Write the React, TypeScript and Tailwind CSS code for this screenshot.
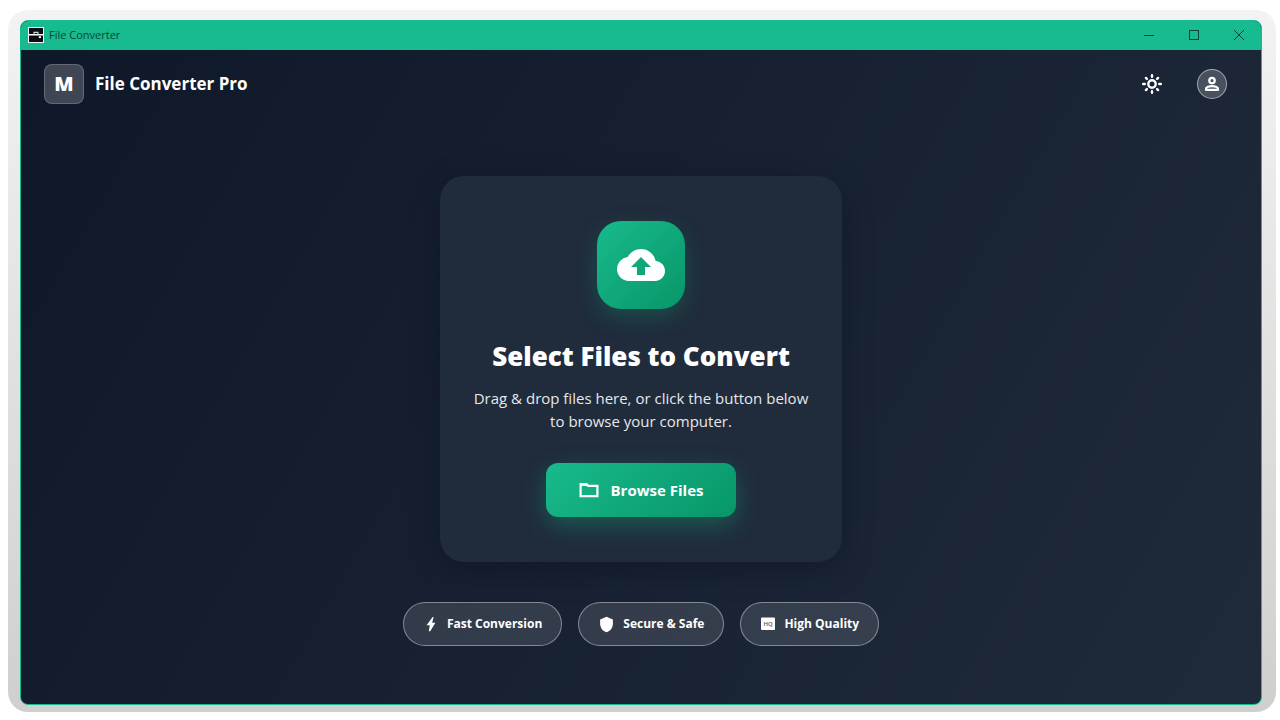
import { useState } from "react";
import type { ReactNode } from "react";
import { MdCloudUpload, MdShield } from "react-icons/md";

function AppIcon() {
  return (
    <svg width="16" height="16" viewBox="0 0 16 16" aria-hidden="true">
      <rect x="0.5" y="0.5" width="15" height="15" fill="#0b0d12" stroke="#e8f5f0" />
      <path d="M1 7.8h14" stroke="#fff" strokeWidth="1.5" />
      <path d="M6 7.2V5.4h4v1.8" fill="none" stroke="#d5d5d5" strokeWidth="1.1" />
      <path d="M10.8 10.2H13" stroke="#fff" strokeWidth="1.8" />
    </svg>
  );
}

function SunIcon() {
  return (
    <svg width="22" height="22" viewBox="0 0 22 22" fill="none" stroke="currentColor" strokeWidth="2.4" strokeLinecap="round" aria-hidden="true">
      <circle cx="11" cy="11" r="3.7" />
      <path d="M11 2.2v1.6M11 18.2v1.6M2.2 11h1.6M18.2 11h1.6M4.9 4.9l1 1M16.1 16.1l1 1M4.9 17.1l1-1M16.1 5.9l1-1" />
    </svg>
  );
}

function PersonIcon() {
  return (
    <svg width="16" height="16" viewBox="0 0 16 16" fill="none" stroke="currentColor" strokeWidth="2.3" strokeLinejoin="round" aria-hidden="true">
      <circle cx="8" cy="4.6" r="2.7" />
      <path d="M2 13.8v-.8c0-1.9 3.6-2.8 6-2.8s6 .9 6 2.8v.8z" />
    </svg>
  );
}

function FolderIcon() {
  return (
    <svg width="20" height="20" viewBox="0 0 20 20" fill="none" stroke="currentColor" strokeWidth="2.2" aria-hidden="true">
      <path d="M1.6 16.2V4h5.8l1.8 1.8h9.2v10.4z" />
      <path d="M1.6 4.8h7" />
    </svg>
  );
}

function BoltIcon() {
  return (
    <svg width="16" height="16" viewBox="0 0 16 16" fill="currentColor" aria-hidden="true">
      <path d="M9.6 1 3.6 9.2h3.2L5.8 15.2h1.4l5.2-8.4H9.2L10.6 1z" />
    </svg>
  );
}

function HighQualityIcon() {
  return (
    <svg width="16" height="16" viewBox="0 0 16 16" aria-hidden="true">
      <rect x="1" y="1.5" width="14" height="12.5" rx="1" fill="currentColor" />
      <text x="8" y="10" textAnchor="middle" fontSize="6" fontWeight="600" fill="#4b5361">
        HQ
      </text>
    </svg>
  );
}

const features = [
  { label: "Fast Conversion", icon: <BoltIcon /> },
  { label: "Secure & Safe", icon: <MdShield size={17} /> },
  { label: "High Quality", icon: <HighQualityIcon /> },
];

function WindowButton({ label, children }: { label: string; children: ReactNode }) {
  return (
    <button type="button" aria-label={label} className="flex h-full w-[45px] items-center justify-center">
      <svg width="12" height="12" viewBox="0 0 12 12" fill="none" stroke="#0b4434" aria-hidden="true">
        {children}
      </svg>
    </button>
  );
}

function TitleBar() {
  return (
    <div className="flex h-[29px] items-center justify-between bg-[#17bb8f] pb-px pl-[7px]">
      <div className="flex items-center gap-[5px] text-[#0b4434]">
        <AppIcon />
        <span className="text-[11px]">File Converter</span>
      </div>
      <div className="flex h-full">
        <WindowButton label="Minimize">
          <path d="M1 6.5h10" />
        </WindowButton>
        <WindowButton label="Maximize">
          <rect x="1.5" y="1.5" width="9" height="9" />
        </WindowButton>
        <WindowButton label="Close">
          <path d="M1 1l10 10M11 1L1 11" />
        </WindowButton>
      </div>
    </div>
  );
}

function Header() {
  return (
    <header className="flex items-center justify-between py-3.5 pr-[34px] pl-[23px] text-white">
      <div className="flex items-center gap-[11px]">
        <div className="flex size-10 items-center justify-center rounded-lg border border-white/20 bg-white/20 text-xl font-extrabold">
          M
        </div>
        <h1 className="text-[17px] font-bold">File Converter Pro</h1>
      </div>
      <div className="flex items-center gap-[34px]">
        <button type="button" aria-label="Toggle theme">
          <SunIcon />
        </button>
        <button
          type="button"
          aria-label="Account"
          className="flex size-[30px] items-center justify-center rounded-full border border-white/50 bg-white/20"
        >
          <PersonIcon />
        </button>
      </div>
    </header>
  );
}

export default function App() {
  const [fileCount, setFileCount] = useState(0);

  const browse = () => {
    const input = document.createElement("input");
    input.type = "file";
    input.multiple = true;
    input.onchange = () => setFileCount(input.files?.length ?? 0);
    input.click();
  };

  return (
    <div className="flex min-h-screen flex-col bg-white pt-2.5 pr-1 pb-2 pl-2 font-['Open_Sans','Noto_Sans',sans-serif]">
      <div className="flex flex-1 flex-col rounded-[20px] bg-linear-to-b from-[#f3f3f3] to-[#cfcfcd] pt-2.5 pr-[14px] pb-[7px] pl-3">
        <div className="flex flex-1 flex-col overflow-hidden rounded-lg border border-[#17bb8f] bg-linear-120 from-[#0f1829] to-[#1f2a3b]">
          <TitleBar />
          <Header />

          <main className="flex flex-1 flex-col items-center justify-center gap-10 text-white">
            {/* Drop zone */}
            <section className="flex w-[402px] max-w-full flex-col items-center rounded-3xl bg-[#202b3b] px-8 py-[45px] text-center shadow-[0_8px_32px_rgba(0,0,0,0.25)]">
              <div className="flex size-[88px] items-center justify-center rounded-3xl bg-linear-135 from-[#18ba8c] to-[#079669] shadow-[0_8px_24px_rgba(16,185,129,0.25)]">
                <MdCloudUpload size={48} />
              </div>
              <h2 className="mt-7 text-[26px] leading-[38px] font-extrabold">Select Files to Convert</h2>
              <p className="mt-3 text-[15px] leading-[23px] text-[#e5e8ec]">
                Drag &amp; drop files here, or click the button below to browse your computer.
              </p>
              <button
                type="button"
                onClick={browse}
                className="mt-[30px] flex h-[54px] items-center gap-3 rounded-xl bg-linear-135 from-[#18ba8c] to-[#079669] px-[33px] text-[15px] font-bold shadow-[0_8px_24px_rgba(16,185,129,0.35)]"
              >
                <FolderIcon />
                {fileCount > 0 ? `${fileCount} selected` : "Browse Files"}
              </button>
            </section>

            {/* Feature badges */}
            <ul className="flex flex-wrap justify-center gap-4">
              {features.map(({ label, icon }) => (
                <li
                  key={label}
                  className="flex h-11 items-center gap-2 rounded-full border border-white/40 bg-white/12 px-[19px] text-[12px] font-bold"
                >
                  {icon}
                  {label}
                </li>
              ))}
            </ul>
          </main>
        </div>
      </div>
    </div>
  );
}
